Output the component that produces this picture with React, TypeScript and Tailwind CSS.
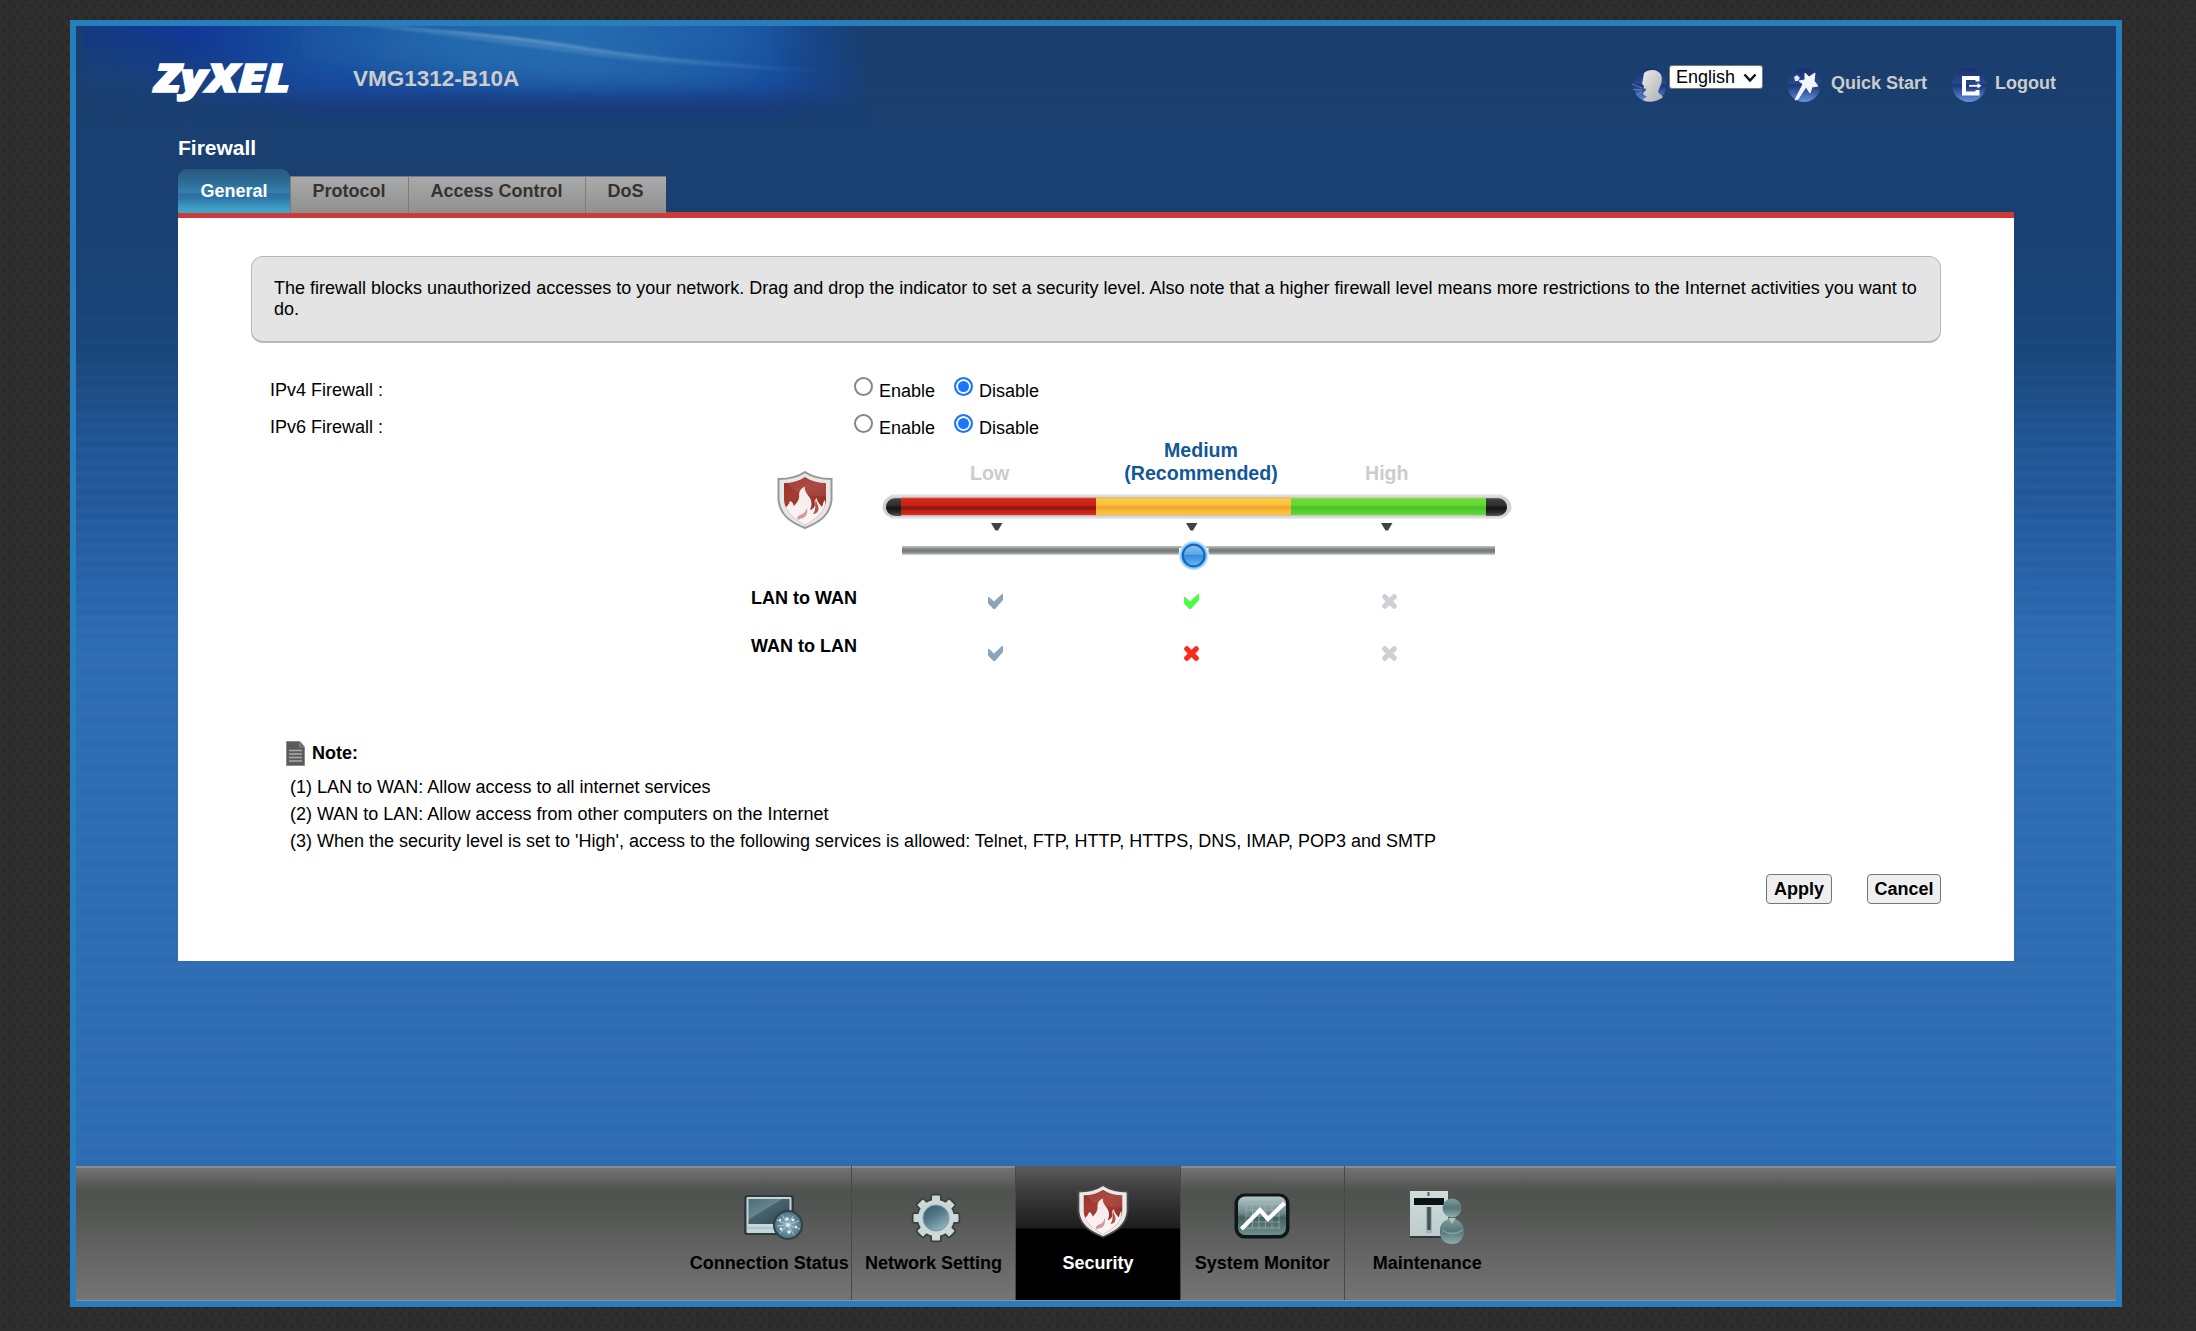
import React, { useState } from 'react';

type Mark = 'check' | 'checkActive' | 'cross' | 'crossActive';

function Shield({ className, rim, edge }: { className: string; rim: string; edge: string }) {
  return (
    <svg viewBox="0 0 56 58" className={className} aria-hidden="true">
      <defs>
        <linearGradient id="shieldRed" x1="0" y1="0" x2="0.5" y2="1">
          <stop offset="0" stopColor="#8f2a22" />
          <stop offset="0.45" stopColor="#a43c32" />
          <stop offset="1" stopColor="#8d2a22" />
        </linearGradient>
        <linearGradient id="flame" x1="0" y1="0" x2="0" y2="1">
          <stop offset="0" stopColor="#f6e8e8" />
          <stop offset="1" stopColor="#fdf8f8" />
        </linearGradient>
        <clipPath id="shieldInner">
          <path d="M28 6 C22 10 15 12 7 12 V29 C8 41 17 48 28 54 C39 48 48 41 49 29 V12 C41 12 34 10 28 6Z" />
        </clipPath>
      </defs>
      <path d="M28 1 C21 6 12 8 1.5 8 V29 C3 44 13 51 28 57 C43 51 53 44 54.5 29 V8 C44 8 35 6 28 1Z" fill={rim} stroke={edge} strokeWidth="2" />
      <g clipPath="url(#shieldInner)">
        <rect width="56" height="58" fill="url(#shieldRed)" />
        <path d="M28 6 L49 12 V24 C38 28 30 22 18 20 L10 12Z" fill="#fff" opacity="0.08" />
        <path d="M5 38 C9 37 12 34 13 30 C16 31 16 33 17 35 C20 32 23 28 22 24 C22 20 24 17 28 15.500 C27 20 31 24 33 27 C35 31 35 35 33 39 C36 38 38 36 38 33 C37 30 38 28 40 27 C40 31 43 33 45 36 C46 33 46 31 48 29 L48 58 H8Z" fill="url(#flame)" />
        <path d="M21 49 C19 45 23 44 27 42 C29 40 29 38 30 37 C31 42 29 46 26 47 C23 48 22 48 21 49Z" fill="#d69a98" />
        <path d="M39 28 C39 33 43 35 41 40 C40 42 38 43 36 43 C40 38 37 33 39 28Z" fill="#b0504a" />
      </g>
    </svg>
  );
}

function MarkIcon({ kind }: { kind: Mark }) {
  if (kind === 'check' || kind === 'checkActive') {
    return (
      <svg viewBox="0 0 15 15" className="block h-[15px] w-[15px]" aria-hidden="true">
        <path d="M0 3 L1 3 L6 7.500 L14 0 H15 V6 L7 15 H5.500 L0 9.500Z" fill={kind === 'check' ? '#8aa4b9' : '#4cfb42'} />
      </svg>
    );
  }
  return (
    <svg viewBox="0 0 15 15" className="block h-[15px] w-[15px]" aria-hidden="true">
      <path
        d="M2.800 2.800 L12.200 12.200 M12.200 2.800 L2.800 12.200"
        stroke={kind === 'cross' ? '#cdd1d6' : '#fb2a1c'}
        strokeWidth="5.200"
        strokeLinecap="round"
      />
    </svg>
  );
}

function HeaderGlow() {
  return (
    <svg viewBox="0 0 790 104" preserveAspectRatio="none" className="pointer-events-none absolute left-[6px] top-0 h-[104px] w-[790px]" aria-hidden="true">
      <defs>
        <linearGradient id="glowX" x1="0" x2="1" y1="0" y2="0">
          <stop offset="0" stopColor="#153984" />
          <stop offset="0.13" stopColor="#103796" />
          <stop offset="0.28" stopColor="#184d9b" />
          <stop offset="0.48" stopColor="#2264ab" />
          <stop offset="0.62" stopColor="#276cb1" />
          <stop offset="0.82" stopColor="#1d5da6" />
          <stop offset="0.92" stopColor="#184a98" />
          <stop offset="1" stopColor="#173f86" />
        </linearGradient>
        <linearGradient id="lower" x1="0" x2="0" y1="0" y2="1">
          <stop offset="0.2" stopColor="#174aa0" stopOpacity="0" />
          <stop offset="0.6" stopColor="#184596" stopOpacity="0.75" />
          <stop offset="0.8" stopColor="#183a80" />
          <stop offset="1" stopColor="#183a78" />
        </linearGradient>
        <linearGradient id="fadeY" x1="0" x2="0" y1="0" y2="1">
          <stop offset="0" stopColor="#fff" />
          <stop offset="0.6" stopColor="#fff" />
          <stop offset="0.82" stopColor="#888" />
          <stop offset="1" stopColor="#000" />
        </linearGradient>
        <linearGradient id="fadeRight" x1="0" x2="1" y1="0" y2="0">
          <stop offset="0" stopColor="#000" stopOpacity="0" />
          <stop offset="0.87" stopColor="#000" stopOpacity="0" />
          <stop offset="0.95" stopColor="#000" stopOpacity="0.5" />
          <stop offset="1" stopColor="#000" />
        </linearGradient>
        <radialGradient id="fadeCorner" gradientUnits="userSpaceOnUse" cx="0" cy="0" r="1" gradientTransform="translate(0 104) scale(240 110)">
          <stop offset="0" stopColor="#000" />
          <stop offset="0.4" stopColor="#000" stopOpacity="0.9" />
          <stop offset="1" stopColor="#000" stopOpacity="0" />
        </radialGradient>
        <mask id="glowMask">
          <rect width="790" height="104" fill="url(#fadeY)" />
          <rect width="790" height="104" fill="url(#fadeRight)" />
          <rect width="790" height="104" fill="url(#fadeCorner)" />
        </mask>
        <linearGradient id="teal" gradientUnits="userSpaceOnUse" x1="180" x2="760" y1="0" y2="0">
          <stop offset="0" stopColor="#226cae" stopOpacity="0" />
          <stop offset="0.4" stopColor="#226cae" stopOpacity="0.7" />
          <stop offset="0.75" stopColor="#226cae" stopOpacity="0.6" />
          <stop offset="1" stopColor="#226cae" stopOpacity="0" />
        </linearGradient>
        <linearGradient id="ray" gradientUnits="userSpaceOnUse" x1="250" x2="760" y1="0" y2="0">
          <stop offset="0" stopColor="#6aa0cc" stopOpacity="0.050" />
          <stop offset="0.35" stopColor="#6aa0cc" stopOpacity="0.7" />
          <stop offset="0.6" stopColor="#5f98c8" stopOpacity="0.6" />
          <stop offset="1" stopColor="#3a7cba" stopOpacity="0" />
        </linearGradient>
        <filter id="soft" filterUnits="userSpaceOnUse" x="0" y="-30" width="790" height="164">
          <feGaussianBlur stdDeviation="1.1" />
        </filter>
        <filter id="softer" filterUnits="userSpaceOnUse" x="0" y="-60" width="790" height="230">
          <feGaussianBlur stdDeviation="10" />
        </filter>
      </defs>
      <g mask="url(#glowMask)">
        <rect width="790" height="104" fill="url(#glowX)" />
        <rect width="790" height="104" fill="url(#lower)" />
        <path d="M180 -10 Q400 4 501 22 T740 46 Q620 62 480 56 T180 30Z" fill="url(#teal)" filter="url(#softer)" />
        <path d="M250 -3 Q420 7 501 22 T750 46 Q600 42 490 27 T250 -3Z" fill="url(#ray)" opacity="0.500" filter="url(#soft)" />
        <path d="M250 -3 Q420 8 501 22 T760 46" fill="none" stroke="url(#ray)" strokeWidth="3" filter="url(#soft)" />
      </g>
    </svg>
  );
}

function OrbDefs() {
  return (
    <defs>
      <linearGradient id="orb" x1="0" y1="0" x2="0" y2="1">
        <stop offset="0" stopColor="#16316f" />
        <stop offset="0.45" stopColor="#29498e" />
        <stop offset="0.5" stopColor="#18357a" />
        <stop offset="1" stopColor="#6593dc" />
      </linearGradient>
      <linearGradient id="head" x1="0" y1="0" x2="1" y2="1">
        <stop offset="0" stopColor="#e9e9e9" />
        <stop offset="1" stopColor="#b0b0b0" />
      </linearGradient>
    </defs>
  );
}

function SpeakerIcon() {
  return (
    <svg viewBox="0 0 36 36" className="h-9 w-9" aria-hidden="true">
      <OrbDefs />
      <ellipse cx="19" cy="18" rx="16.5" ry="17" fill="url(#orb)" />
      <path d="M13 6 C18 1.500 28 2 30.500 9 C32 16 28 21 27 25 L32 30 C28 34 19 36 12 33 L16 29 C12 29 12 26 13 25 L15 23.500 L12.500 22 L13 19 L11 17 L12 12Z" fill="url(#head)" />
      <path d="M12 21 L15.500 22 L13 24.500Z" fill="#4a5a7a" />
      <path d="M1 17 L11 21 M2 22.500 L11 23 M5 28 L11 25" stroke="#8ba4d0" strokeWidth="0.900" opacity="0.700" />
    </svg>
  );
}

function WandIcon() {
  return (
    <svg viewBox="0 0 36 36" className="h-9 w-9" aria-hidden="true">
      <ellipse cx="18" cy="18" rx="16.5" ry="17" fill="url(#orb)" />
      <path d="M19 6 L23 10 L29 6 L28 14 L32 19 L26 20 L24 26 L20 20 L12 32 L9 33 L17 17 L13 14 L19 13Z" fill="#f4f5f8" stroke="#f4f5f8" strokeWidth="1" strokeLinejoin="round" />
      <path d="M8 10 L11 8 L14 11 L12 14 L9 14Z" fill="#dfe5f1" />
    </svg>
  );
}

function ExitIcon() {
  return (
    <svg viewBox="0 0 36 36" className="h-9 w-9" aria-hidden="true">
      <ellipse cx="18" cy="18" rx="17" ry="17" fill="url(#orb)" />
      <path d="M26.500 14.500 V11 H13 V26.5 H26.500 V23" fill="none" stroke="#fff" strokeWidth="4" />
      <path d="M18 18.800 H28" stroke="#fff" strokeWidth="1.800" />
      <path d="M26.500 16 L30.500 18.800 L26.500 21.600Z" fill="#fff" />
    </svg>
  );
}

function ConnectionIcon() {
  return (
    <svg viewBox="0 0 64 54" className="h-[54px] w-16" aria-hidden="true">
      <defs>
        <linearGradient id="screen" x1="0" y1="0" x2="1" y2="1">
          <stop offset="0" stopColor="#4d6b76" />
          <stop offset="0.4" stopColor="#64858f" />
          <stop offset="0.42" stopColor="#46636e" />
          <stop offset="1" stopColor="#31474f" />
        </linearGradient>
        <radialGradient id="globe">
          <stop offset="0" stopColor="#8fb3c0" />
          <stop offset="1" stopColor="#4f7685" />
        </radialGradient>
      </defs>
      <rect x="2" y="4" width="50" height="40" rx="3" fill="#2f3a3c" />
      <rect x="4.500" y="6" width="45" height="36" rx="1.500" fill="#c6d5d8" />
      <rect x="6.500" y="8" width="41" height="25" fill="url(#screen)" />
      <path d="M5 37 H49" stroke="#9fb2b4" strokeWidth="1" />
      <circle cx="46" cy="34" r="15" fill="#2f3f44" />
      <circle cx="46" cy="34" r="13" fill="url(#globe)" />
      <path d="M35 29 L46 34 L57 30 M38 42 L46 34 L52 44 M40 24 L46 34 L51 25 M35 35 L46 34 L58 38" stroke="#a9c6cf" strokeWidth="1" fill="none" />
      <g fill="#e3eef0">
        <circle cx="46" cy="34" r="2" />
        <circle cx="45" cy="28" r="1.800" />
        <circle cx="51" cy="29" r="1.400" />
        <circle cx="39" cy="38" r="1.400" />
        <circle cx="47" cy="41" r="1.800" />
        <circle cx="38" cy="29" r="1.200" />
        <circle cx="54" cy="36" r="1.200" />
      </g>
    </svg>
  );
}

function GearIcon() {
  return (
    <svg viewBox="-27 -27 54 54" className="h-[54px] w-[54px]" aria-hidden="true">
      <defs>
        <linearGradient id="gearLens" x1="0" y1="0" x2="0.6" y2="1">
          <stop offset="0" stopColor="#3a5968" />
          <stop offset="0.5" stopColor="#52788a" />
          <stop offset="1" stopColor="#8fb0bc" />
        </linearGradient>
      </defs>
      <g fill="#37403f" stroke="#37403f" strokeWidth="3.500" strokeLinejoin="round">
        {[0, 45, 90, 135].map((a) => (
          <rect key={a} x="-4" y="-22.500" width="8" height="45" rx="1" transform={`rotate(${a})`} />
        ))}
        <circle r="18" />
      </g>
      <g fill="#ccd8d8">
        <circle r="18" />
        {[0, 45, 90, 135].map((a) => (
          <g key={a} transform={`rotate(${a})`}>
            <rect x="-4" y="-22.500" width="8" height="7" rx="1" />
            <rect x="-4" y="15.500" width="8" height="7" rx="1" />
          </g>
        ))}
      </g>
      <circle r="13" fill="url(#gearLens)" stroke="#7f979e" strokeWidth="1" />
    </svg>
  );
}

function MonitorIcon() {
  return (
    <svg viewBox="0 0 56 46" className="h-[46px] w-14" aria-hidden="true">
      <defs>
        <linearGradient id="monitorGlass" x1="0" y1="0" x2="0" y2="1">
          <stop offset="0" stopColor="#b4c6c6" />
          <stop offset="0.45" stopColor="#6a8686" />
          <stop offset="0.55" stopColor="#435f5f" />
          <stop offset="1" stopColor="#6f8f8f" />
        </linearGradient>
      </defs>
      <rect x="0.500" y="0.500" width="55" height="45" rx="10" fill="#0e1818" />
      <rect x="4" y="3.500" width="48" height="38.500" rx="7" fill="url(#monitorGlass)" />
      <path d="M12 11 H46 M12 17 H46 M12 23 H46 M12 29 H46 M12 35 H46 M12 11 V36 M18.500 11 V36 M25 11 V36 M31.500 11 V36 M38 11 V36 M45 11 V36" stroke="#a9bfbf" strokeWidth="0.900" opacity="0.600" />
      <path d="M7.500 36 L26 17 L34 26 L50.500 10" fill="none" stroke="#fff" strokeWidth="4.200" />
    </svg>
  );
}

function MaintenanceIcon() {
  return (
    <svg viewBox="0 0 58 56" className="h-14 w-[58px]" aria-hidden="true">
      <defs>
        <linearGradient id="person" x1="0" y1="0" x2="0" y2="1">
          <stop offset="0" stopColor="#7d9b9b" />
          <stop offset="0.5" stopColor="#56787a" />
          <stop offset="1" stopColor="#93adac" />
        </linearGradient>
        <linearGradient id="cabinet" x1="0" y1="0" x2="0" y2="1">
          <stop offset="0" stopColor="#cfdcdc" />
          <stop offset="1" stopColor="#bccccc" />
        </linearGradient>
      </defs>
      <path d="M2 46 H34 V48 H2Z" fill="#2d3a39" />
      <rect x="2" y="1" width="38" height="45" fill="url(#cabinet)" />
      <rect x="6" y="8" width="30" height="7" fill="#0b1212" />
      <path d="M20.500 2 V6" stroke="#4d6262" strokeWidth="2" />
      <path d="M21 17 V43" stroke="#9fb2b2" strokeWidth="6" />
      <path d="M21 17 V40" stroke="#405353" strokeWidth="3.500" />
      <path d="M32 40 C32 33 37 29 44 29 C51 29 56 34 56 42 C55 50 51 54 44 54 C36 54 31 48 32 40Z" fill="url(#person)" />
      <circle cx="44" cy="18" r="9.500" fill="url(#person)" />
      <path d="M34 40 Q44 47 55 40" fill="none" stroke="#a9c0bf" strokeWidth="1.500" opacity="0.500" />
      <path d="M40 28 L44 34 L48 28Z" fill="#a9c0c0" />
    </svg>
  );
}

function NoteIcon() {
  return (
    <svg viewBox="0 0 19 25" className="h-[25px] w-[19px]" aria-hidden="true">
      <path d="M0.500 0.500 H14 L18.500 6 V24.500 H0.500Z" fill="#5b5b5b" stroke="#8b8b8b" />
      <path d="M3 9.500 H16 M3 13 H16 M3 16.500 H16 M3 20 H16" stroke="#adadad" strokeWidth="1.500" />
      <path d="M13.500 1 V6 H18" fill="#6f6f6f" stroke="#8b8b8b" strokeWidth="0.700" />
    </svg>
  );
}

const tabs = [
  { label: 'Protocol', width: 'w-[118px]' },
  { label: 'Access Control', width: 'w-[177px]' },
  { label: 'DoS', width: 'w-[81px]' },
];

const rules: { label: string; marks: Mark[] }[] = [
  { label: 'LAN to WAN', marks: ['check', 'checkActive', 'cross'] },
  { label: 'WAN to LAN', marks: ['check', 'crossActive', 'cross'] },
];

function Radio({ name, label, checked, onSelect }: { name: string; label: string; checked: boolean; onSelect: () => void }) {
  return (
    <label className="flex w-[100px] items-start leading-[21px]">
      <input
        type="radio"
        name={name}
        checked={checked}
        onChange={onSelect}
        className="mr-[6px] h-[19px] w-[19px] shrink-0 appearance-none rounded-full border-2 border-[#868686] bg-white checked:border-[#1a75ff] checked:bg-[#1a75ff] checked:shadow-[inset_0_0_0_2px_white]"
      />
      <span className="mt-[4px]">{label}</span>
    </label>
  );
}

function FirewallRow({ name }: { name: string }) {
  const [enabled, setEnabled] = useState(false);
  return (
    <div className="flex h-[37px] pl-[92px]">
      <span className="mt-[3px] w-[584px] leading-[21px]">{name} Firewall :</span>
      <Radio name={name} label="Enable" checked={enabled} onSelect={() => setEnabled(true)} />
      <Radio name={name} label="Disable" checked={!enabled} onSelect={() => setEnabled(false)} />
    </div>
  );
}

function SecurityGauge() {
  return (
    <svg viewBox="0 0 632 80" className="block h-20 w-[632px]" aria-hidden="true">
      <defs>
        <linearGradient id="gRed" x1="0" y1="0" x2="0" y2="1">
          <stop offset="0" stopColor="#e87264" />
          <stop offset="0.08" stopColor="#d42a1b" />
          <stop offset="0.44" stopColor="#c42314" />
          <stop offset="0.52" stopColor="#8f170d" />
          <stop offset="0.66" stopColor="#941a10" />
          <stop offset="0.72" stopColor="#c42314" />
          <stop offset="0.93" stopColor="#cc2516" />
          <stop offset="1" stopColor="#e88378" />
        </linearGradient>
        <linearGradient id="gAmber" x1="0" y1="0" x2="0" y2="1">
          <stop offset="0" stopColor="#f3b04a" />
          <stop offset="0.1" stopColor="#fdca45" />
          <stop offset="0.42" stopColor="#fbc03a" />
          <stop offset="0.55" stopColor="#eda42e" />
          <stop offset="0.75" stopColor="#fbbb36" />
          <stop offset="0.92" stopColor="#fcc23c" />
          <stop offset="1" stopColor="#e9b764" />
        </linearGradient>
        <linearGradient id="gGreen" x1="0" y1="0" x2="0" y2="1">
          <stop offset="0" stopColor="#b5d965" />
          <stop offset="0.1" stopColor="#6edb3a" />
          <stop offset="0.42" stopColor="#62d733" />
          <stop offset="0.55" stopColor="#47c22a" />
          <stop offset="0.75" stopColor="#55cf30" />
          <stop offset="0.92" stopColor="#5ed334" />
          <stop offset="1" stopColor="#a5d56f" />
        </linearGradient>
        <linearGradient id="gBlack" x1="0" y1="0" x2="0" y2="1">
          <stop offset="0" stopColor="#6e6e6e" />
          <stop offset="0.1" stopColor="#3c3c3c" />
          <stop offset="0.42" stopColor="#2e2e2e" />
          <stop offset="0.55" stopColor="#131313" />
          <stop offset="0.8" stopColor="#2b2b2b" />
          <stop offset="1" stopColor="#5a5a5a" />
        </linearGradient>
        <linearGradient id="gShell" x1="0" y1="0" x2="0" y2="1">
          <stop offset="0" stopColor="#eef0f2" />
          <stop offset="0.14" stopColor="#cdd1d5" />
          <stop offset="0.88" stopColor="#cdd1d5" />
          <stop offset="1" stopColor="#eef0f2" />
        </linearGradient>
        <linearGradient id="gTrack" x1="0" y1="0" x2="0" y2="1">
          <stop offset="0" stopColor="#c6caca" />
          <stop offset="0.25" stopColor="#8d9290" />
          <stop offset="0.5" stopColor="#727872" />
          <stop offset="0.75" stopColor="#8b8f8d" />
          <stop offset="1" stopColor="#d9dcdd" />
        </linearGradient>
        <linearGradient id="gKnob" x1="0" y1="0" x2="0" y2="1">
          <stop offset="0" stopColor="#8cc4ee" />
          <stop offset="0.45" stopColor="#5aa7e6" />
          <stop offset="0.5" stopColor="#348bde" />
          <stop offset="1" stopColor="#6cb8f2" />
        </linearGradient>
        <radialGradient id="gHalo">
          <stop offset="0.76" stopColor="#3fa9ff" />
          <stop offset="0.86" stopColor="#8accff" />
          <stop offset="1" stopColor="#f2f9ff" />
        </radialGradient>
      </defs>
      <path d="M11 0 H620 L627 5 Q630.500 9 630.500 13 Q630.500 17 627 20.500 L621 25 H11 L4.500 20.500 Q1.500 17 1.500 13 Q1.500 9 4.500 5Z" fill="url(#gShell)" />
      <path d="M20 4 H14 A9 9 0 0 0 14 22 H20Z" fill="url(#gBlack)" />
      <rect x="20" y="3.500" width="195" height="18" fill="url(#gRed)" />
      <rect x="215" y="3.500" width="195" height="18" fill="url(#gAmber)" />
      <rect x="410" y="3.500" width="195" height="18" fill="url(#gGreen)" />
      <path d="M605 4 H617 A9 9 0 0 1 617 22 H605Z" fill="url(#gBlack)" />
      <g fill="#404347">
        <path d="M110 29 H121.500 L117 36.500 H114.500Z" />
        <path d="M305 29 H316.500 L312 36.500 H309.500Z" />
        <path d="M500 29 H511.500 L507 36.500 H504.500Z" />
      </g>
      <rect x="21" y="52" width="593" height="9" fill="url(#gTrack)" />
      <rect x="298" y="54" width="29.500" height="8" fill="#fff" />
      <circle cx="312.700" cy="61.500" r="15" fill="url(#gHalo)" />
      <circle cx="312.700" cy="61.500" r="10.800" fill="url(#gKnob)" stroke="#1764b8" strokeWidth="2" />
    </svg>
  );
}

const navItems = [
  { label: 'Connection Status', icon: <ConnectionIcon />, pad: 'pt-[25px] pl-[10px]' },
  { label: 'Network Setting', icon: <GearIcon />, pad: 'pt-[25px] pl-[4px]' },
  { label: 'Security', icon: <Shield className="h-[54px] w-[52px]" rim="#ebe9e9" edge="#4a4a4a" />, pad: 'pt-[18px] pl-[11px]' },
  { label: 'System Monitor', icon: <MonitorIcon />, pad: 'pt-[27px] pl-0' },
  { label: 'Maintenance', icon: <MaintenanceIcon />, pad: 'pt-[24px] pl-[20px]' },
];

export default function App() {
  return (
    <div
      className="h-[1331px] w-[2196px] bg-[#2e2e2f] bg-[radial-gradient(circle,#272728_1px,transparent_2.500px),radial-gradient(circle,#29292a_1px,transparent_2.500px)] bg-[length:9px_12px] bg-[position:0_0,4px_6px] pl-[70px] pt-5 text-[18px] text-black"
      style={{ fontFamily: '"Liberation Sans", Arial, sans-serif' }}
    >
      <div className="relative flex h-[1287px] w-[2052px] flex-col border-6 border-[#267ebd] bg-[linear-gradient(to_bottom,#1a3f6e_0px,#1a4072_184px,#1a467a_324px,#1f5290_404px,#23589c_484px,#2863aa_564px,#2e6cb2_624px,#2e6cb2_100%)]">
        <div className="pointer-events-none absolute inset-x-0 bottom-[135px] top-[250px] bg-[repeating-linear-gradient(to_bottom,rgba(60,135,190,0)_0px,rgba(60,135,190,0.15)_6px,rgba(60,135,190,0)_12px)] [mask-image:linear-gradient(to_bottom,transparent,black_200px)]" />
        <HeaderGlow />

        <header className="relative flex h-[112px] shrink-0 pl-[76px] font-bold text-[#cccccc]">
          <svg viewBox="0 -16 150 76" className="mt-[13px] h-[76px] w-[150px] overflow-visible" role="img" aria-label="ZyXEL">
            <text
              x="3"
              y="36.500"
              textLength="135"
              lengthAdjust="spacingAndGlyphs"
              fill="#fff"
              stroke="#fff"
              strokeWidth="1.600"
              style={{ fontFamily: '"Open Sans", "Liberation Sans", sans-serif', fontWeight: 800, fontStyle: 'italic', fontSize: 39 }}
            >
              ZyXEL
            </text>
          </svg>
          <span className="ml-[51px] mt-[40px] text-[22.5px] leading-[26px]">VMG1312-B10A</span>
          <div className="ml-auto mr-[60px] mt-[39px] flex">
            <div className="mt-[2px]"><SpeakerIcon /></div>
            <div className="relative ml-[2px] h-6 w-[94px]">
              <select className="block h-6 w-full appearance-none rounded-[3px] border border-[#767676] bg-white pl-[6px] font-normal leading-[20px] text-black">
                <option>English</option>
              </select>
              <svg viewBox="0 0 14 10" className="pointer-events-none absolute right-[6px] top-[8px] h-[10px] w-[14px]" aria-hidden="true">
                <path d="M1.500 1.500 L7 7.500 L12.500 1.500" fill="none" stroke="#111" strokeWidth="2.500" />
              </svg>
            </div>
            <a className="ml-[23px] flex items-start">
              <span className="mt-[2px]"><WandIcon /></span>
              <span className="ml-[9px] mt-[8px] w-[99px] whitespace-nowrap leading-[21px]">Quick Start</span>
            </a>
            <a className="ml-[21px] flex items-start">
              <span className="mt-[2px]"><ExitIcon /></span>
              <span className="ml-[8px] mt-[8px] leading-[21px]">Logout</span>
            </a>
          </div>
        </header>

        <main className="relative mx-[102px] w-[1836px]">
          <h1 className="-mt-[2px] h-[33px] text-[21px] font-bold leading-[24px] text-white">Firewall</h1>
          <nav className="flex h-[44px] items-end font-bold leading-[21px]">
            <a className="h-[44px] w-[112px] rounded-t-[9px] bg-[linear-gradient(to_bottom,#29597f_0%,#2d6c97_30%,#3480ae_53%,#2c6fa6_56%,#2d74a8_65%,#3ea0c4_90%,#41a6c9_100%)] pt-[12px] text-center text-white">General</a>
            {tabs.map((tab) => (
              <a
                key={tab.label}
                className={`${tab.width} h-[37px] border-l border-t border-l-[#7c7c7c] border-t-[#757b85] bg-[linear-gradient(to_bottom,#aaaaaa,#8f8f8f)] pt-[4px] pr-px text-center text-[#333333]`}
              >
                {tab.label}
              </a>
            ))}
          </nav>
          <section className="-mt-px h-[749px] border-t-6 border-[#cd3a3a] bg-white">
            <p className="mx-[73px] mt-[38px] h-[87px] w-[1690px] rounded-[12px] border border-b-2 border-[#b8b8b8] bg-[#e4e4e4] pl-[22px] pr-[20px] pt-[21px] leading-[21px]">
              The firewall blocks unauthorized accesses to your network. Drag and drop the indicator to set a security level. Also note that a higher firewall level means more restrictions to the Internet activities you want to do.
            </p>

            <div className="mt-[34px]">
              <FirewallRow name="IPv4" />
              <FirewallRow name="IPv6" />
            </div>

            <div className="-mt-[19px] flex h-[53px] items-end pl-[703px] text-[19.6px] font-bold leading-[23px] text-[#cccccc]">
              <span className="w-[218px] pl-[89px]">Low</span>
              <span className="w-[204px] text-center text-[#125797]">
                Medium
                <br />
                (Recommended)
              </span>
              <span className="pl-[62px]">High</span>
            </div>
            <div className="mt-px flex h-[92px] pl-[599px]">
              <div className="-mt-[15px] w-[104px]">
                <Shield className="h-[58px] w-14" rim="#e7e7e7" edge="#989898" />
              </div>
              <div className="pt-[8px]">
                <SecurityGauge />
              </div>
            </div>

            <div className="mt-[10px]">
              {rules.map((rule) => (
                <div key={rule.label} className="flex h-[48px] pl-[573px]">
                  <span className="w-[237px] font-bold leading-[21px]">{rule.label}</span>
                  {rule.marks.map((mark, i) => (
                    <span key={i} className={`${rule.label === 'LAN to WAN' ? 'pt-[6px]' : 'pt-[10px]'} ${i === 0 ? 'w-[196px]' : 'w-[198px]'}`}>
                      <MarkIcon kind={mark} />
                    </span>
                  ))}
                </div>
              ))}
            </div>

            <div className="mt-[57px] pl-[108px]">
              <div className="flex h-[33px] items-start font-bold">
                <NoteIcon />
                <span className="ml-[7px] mt-[2px] leading-[21px]">Note:</span>
              </div>
              <ol className="pl-[4px] leading-[27px]">
                <li>(1) LAN to WAN: Allow access to all internet services</li>
                <li>(2) WAN to LAN: Allow access from other computers on the Internet</li>
                <li>(3) When the security level is set to &apos;High&apos;, access to the following services is allowed: Telnet, FTP, HTTP, HTTPS, DNS, IMAP, POP3 and SMTP</li>
              </ol>
            </div>

            <div className="mr-[73px] mt-[19px] flex justify-end gap-[35px] font-bold">
              <button className="h-[30px] w-[66px] rounded-[4px] border border-[#767676] bg-[#efefef] leading-[26px]">Apply</button>
              <button className="h-[30px] w-[74px] rounded-[4px] border border-[#767676] bg-[#efefef] leading-[26px]">Cancel</button>
            </div>
          </section>
        </main>

        <footer className="relative mt-auto flex h-[135px] shrink-0 border-b border-t-2 border-b-[#8d8d8d] border-t-[#8c8c8c] bg-[linear-gradient(to_bottom,#737373_0px,#505250_22px,#525452_40px,#727272_125px,#767676_100%)] pl-[611.5px] font-bold">
          {navItems.map((item, i) => (
            <a
              key={item.label}
              className={`-mt-[2px] flex h-[134px] w-[164.400px] flex-col items-center leading-[21px] ${
                item.label === 'Security'
                  ? 'bg-[linear-gradient(to_bottom,#5c5c5c_0px,#3c3c3c_25px,#1d1d1d_62px,#000000_63px)] text-white'
                  : 'text-black'
              } ${i < 4 ? 'border-r border-[#474947]' : ''}`}
            >
              <span className={`flex h-[87px] ${item.pad}`}>{item.icon}</span>
              <span className="whitespace-nowrap">{item.label}</span>
            </a>
          ))}
        </footer>
      </div>
    </div>
  );
}
